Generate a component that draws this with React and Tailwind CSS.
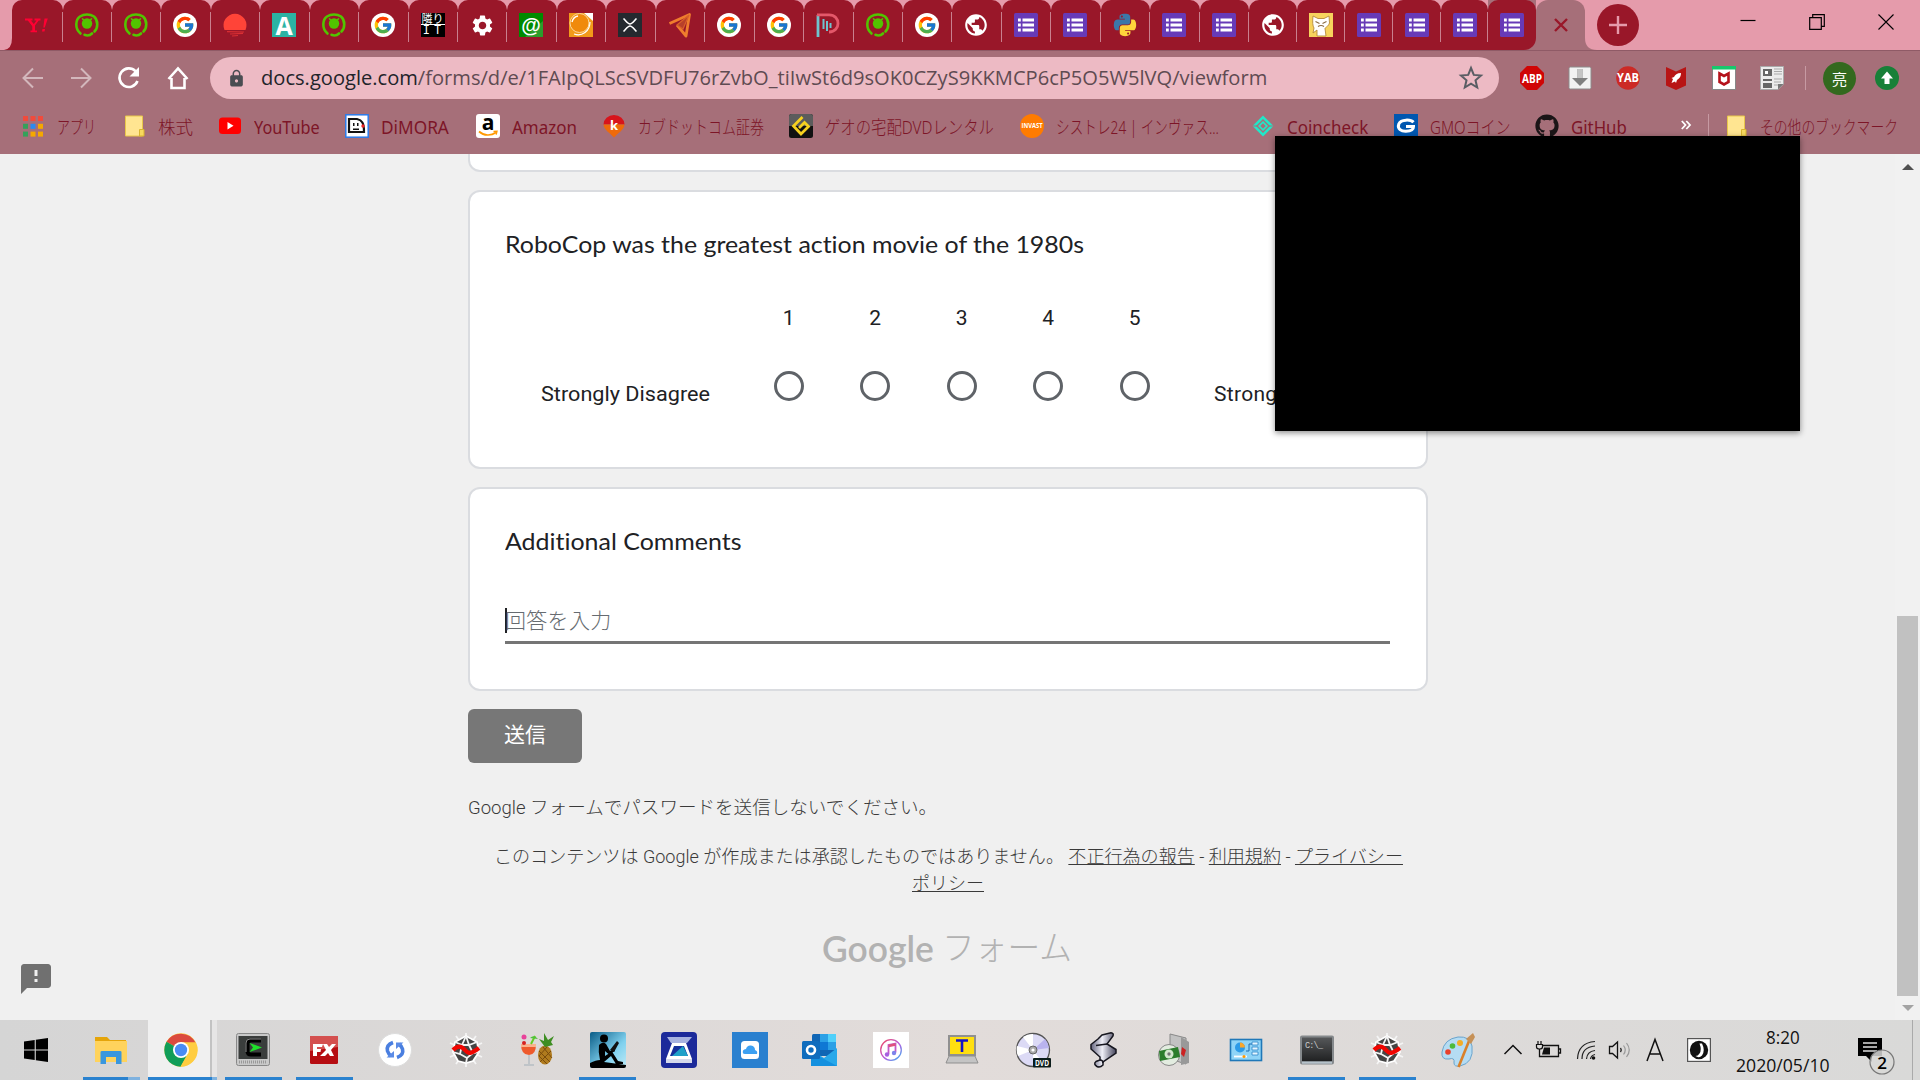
import React, { useLayoutEffect, useRef, useState } from "react";
import { FcGoogle } from "react-icons/fc";
import { FaGithub } from "react-icons/fa";
import { MdHttps, MdSettings, MdFeedback, MdPublic } from "react-icons/md";

const UI = "font-['Noto_Sans','Noto_Sans_CJK_JP',sans-serif]";
const SEGOE = "font-['Open_Sans','Noto_Sans_CJK_JP',sans-serif]";
const ROBOTO = "font-['Roboto','Noto_Sans_CJK_JP',sans-serif]";
const GSANS = "font-['Lato','Noto_Sans_CJK_JP',sans-serif] [font-variant-ligatures:none]";

/* One line of text condensed or stretched to a given advance width. */
function Fit({ w, className = "", children }) {
  const ref = useRef(null);
  const [scale, setScale] = useState(1);
  useLayoutEffect(() => {
    setScale(w / ref.current.offsetWidth);
  }, [w]);
  return (
    <span className="inline-block whitespace-nowrap" style={{ width: w }}>
      <span ref={ref} className={"inline-block origin-left whitespace-nowrap " + className} style={{ transform: `scaleX(${scale})` }}>
        {children}
      </span>
    </span>
  );
}

const Svg = ({ s = 24, vb = "0 0 24 24", className = "", children }) => (
  <svg width={s} height={s} viewBox={vb} fill="none" className={"shrink-0 overflow-visible " + className}>{children}</svg>
);

/* ---------- tab icons ---------- */
const Yahoo = () => (
  <Svg><path d="M1 6.500H8.500M10.500 6.500H16.500M4.500 7L9.500 13V18M14 7L9.500 13M6.500 18.300H13" stroke="#ff0033" strokeWidth="1.800" /><path d="M4 7H6.500L11 12.500V18H8.500V13.500Z" fill="#ff0033" /><path d="M20.500 5.500H23.800L20.800 14.500H19.300ZM18.500 16H21L20.500 18.500H18Z" fill="#ff0033" /></Svg>
);
const GreenE = () => (
  <Svg>
    <path d="M5.500 20.500C-.5 15.500 .5 6.500 5 3.500C9 .8 15 .8 19 3.500C23.500 7.500 23 15 19.500 18.500" stroke="#52c400" strokeWidth="2.600" strokeLinecap="round" />
    <path d="M9.500 21.800C12 22.800 15 22.500 17 20.500" stroke="#52c400" strokeWidth="2.600" strokeLinecap="round" />
    <circle cx="12" cy="10.500" r="5.200" fill="#52c400" />
    <path d="M7.500 5.800L9 7.500M16.500 5.800L15 7.500" stroke="#52c400" strokeWidth="1.600" strokeLinecap="round" />
  </Svg>
);
const Goog = () => (
  <span className="flex size-6 items-center justify-center rounded-full bg-white"><FcGoogle size={20} /></span>
);
const Sun = () => (
  <Svg><path d="M1.500 17A11.500 11.500 0 1 1 22.500 17Z" fill="#ff4438" /><path d="M4 18.700L21 19M7 21L20 20.300M9 23L15 22.500" stroke="#d92f33" strokeWidth="1.200" /></Svg>
);
const LetterA = () => (
  <Svg><rect width="24" height="24" fill="#2bb3a3" /><text x="12" y="21.500" textAnchor="middle" fontFamily="Open Sans" fontWeight="bold" fontSize="25" fill="#fff">A</text></Svg>
);
const Tonari = () => (
  <span className="flex size-6 flex-col items-center bg-black text-white">
    <span className="h-[12px] w-6 border-b border-white text-center font-['Noto_Sans_CJK_JP',sans-serif] text-[11px] leading-[11px]">隣り</span>
    <span className="h-[12px] font-['Liberation_Mono',monospace] text-[12px] leading-[12px] tracking-[4px] pl-[3px]">IT</span>
  </span>
);
const At = () => (
  <Svg><rect width="24" height="24" fill="#008a00" /><path d="M24 8V24H6Z" fill="#2c9c2c" /><text x="12" y="18.500" textAnchor="middle" fontFamily="Liberation Sans" fontWeight="bold" fontSize="20" fill="#fff">@</text></Svg>
);
const Orange = () => (
  <Svg><rect width="24" height="24" fill="#f29a1a" /><path d="M15 0H24V8Z" fill="#fff" /><circle cx="10.500" cy="10" r="9.500" fill="#f08a0c" stroke="#fbd9a0" strokeWidth="1" /><path d="M3 9C4 5 6 3.500 9 3" stroke="#fff" strokeWidth="1.400" /><path d="M5 21C13 24 21 18 21 9" stroke="#fff" strokeWidth="1.200" /></Svg>
);
const Xrp = () => (
  <Svg><rect width="24" height="24" fill="#23292f" /><path d="M5.500 5.500C8 8 10 11 12 11S16 8 18.500 5.500M5.500 18.500C8 16 10 13 12 13S16 16 18.500 18.500" stroke="#fff" strokeWidth="1.600" /></Svg>
);
const Tri = () => (
  <Svg><path d="M1.500 10.500L21.500 1.500L18 23L9 12" stroke="#ef7d2d" strokeWidth="2.800" strokeLinejoin="round" /><path d="M21 2L9 12L15 16Z" fill="#b8402a" stroke="#d9602a" strokeWidth="1.200" /></Svg>
);
const PD = () => (
  <Svg><path d="M2 2V24" stroke="#6fc4cf" strokeWidth="2.800" /><path d="M1 1.800H13C25 1.800 25 19 13 19" stroke="#e4586a" strokeWidth="2.800" /><path d="M7.500 6V16M11 8V18M14.500 10V15" stroke="#6fc4cf" strokeWidth="2" /></Svg>
);
const Globe = () => <MdPublic size={26} color="#fff" className="-ml-px" />;
const Form = () => (
  <Svg><rect width="24" height="24" rx="1.500" fill="#673ab7" /><path d="M4 7H6.800M4 12H6.800M4 17H6.800M8.500 7H20M8.500 12H20M8.500 17H20" stroke="#fff" strokeWidth="3" /></Svg>
);
const Python = () => (
  <Svg vb="-16 16 480 480">
    <path fill="#ffd43b" fillRule="evenodd" d="M439.800 200.500c-7.700-30.900-22.300-54.200-53.400-54.200h-40.100v47.400c0 36.800-31.200 67.800-66.800 67.800H172.700c-29.200 0-53.400 25-53.400 54.300v101.800c0 29 25.200 46 53.400 54.300 33.800 9.900 66.300 11.700 106.800 0 26.900-7.800 53.400-23.500 53.400-54.300v-40.700H226.200v-13.600h160.200c31.100 0 42.600-21.700 53.400-54.200 11.200-33.500 10.700-65.700 0-108.600zM286.200 404c11.100 0 20.100 9.100 20.100 20.300 0 11.300-9 20.400-20.100 20.400-11 0-20.100-9.200-20.100-20.400.1-11.300 9.100-20.300 20.100-20.300z" />
    <path fill="#3b77a8" fillRule="evenodd" d="M167.800 248.100h106.800c29.700 0 53.400-24.500 53.400-54.300V91.900c0-29-24.400-50.700-53.400-55.600-35.800-5.900-74.700-5.600-106.800.1-45.200 8-53.400 24.700-53.400 55.600v40.700h106.900v13.600h-147c-31.100 0-58.300 18.700-66.800 54.200-9.800 40.700-10.200 66.100 0 108.600 7.600 31.600 25.700 54.200 56.800 54.200H101v-48.800c0-35.300 30.500-66.400 66.800-66.400zm-6.700-142.600c-11.100 0-20.100-9.100-20.100-20.300.1-11.300 9-20.400 20.100-20.400 11 0 20.100 9.200 20.100 20.400s-9 20.300-20.100 20.300z" />
  </Svg>
);
const Cat = () => (
  <Svg><rect width="24" height="24" fill="#f7d35d" /><path d="M4 3L9 5.500H15L20 3L20.500 10C19 14 16.500 14 16 15.500L17 23H8L8 17L4 20L5 15Q3 12 4 3Z" fill="#fff" stroke="#b58a3a" strokeWidth=".9" /><path d="M6.500 8.500L10.500 10.500M17.500 8.500L13.500 10.500M9 13.500Q12 11.500 15 13.500" stroke="#8a6a40" strokeWidth="1.100" /></Svg>
);
const Gear = () => <MdSettings size={25} color="#fff" />;

const tabs = [Yahoo, GreenE, GreenE, Goog, Sun, LetterA, GreenE, Goog, Tonari, Gear, At, Orange, Xrp, Tri, Goog, Goog, PD, GreenE, Goog, Globe, Form, Form, Python, Form, Form, Globe, Cat, Form, Form, Form, Form];

function TabStrip() {
  return (
    <div className="flex h-[50px] bg-[#e59bab]">
      <div className="flex h-[50px] items-end"><Svg s={12} vb="0 0 12 12"><path d="M12 0V12H4Q12 11 12 0" fill="#991729" /></Svg></div>
      {tabs.map((Icon, i) => (
        <div key={i} className={"flex h-[50px] shrink-0 items-center " + (i === 0 ? "w-[50.500px] bg-[#e59bab]" : i < 25 ? "w-[49.450px] bg-[#e59bab]" : i < 30 ? "w-[47.900px] bg-[#e59bab]" : "w-[47.900px] bg-[#a66f79]")}>
          <div className={"flex h-full w-full items-center rounded-t-[10px] bg-[#991729] pl-3 " + (i === 30 ? "rounded-br-[12px]" : "")}>
            <Icon />
            {i < 30 && <span className="ml-auto mt-1 h-[30px] w-px bg-[#c9808e]" />}
          </div>
        </div>
      ))}
      <div className="flex h-[50px] w-[49px] items-center justify-center rounded-t-[12px] bg-[#a66f79]">
        <Svg s={14} vb="0 0 14 14"><path d="M1 1L13 13M13 1L1 13" stroke="#991729" strokeWidth="2.400" /></Svg>
      </div>
      <div className="flex w-3 items-end"><Svg s={12} vb="0 0 12 12"><path d="M0 0V12H12Q0 12 0 0" fill="#a66f79" /></Svg></div>
      <div className="mt-1 flex size-[42px] items-center justify-center rounded-full bg-[#991729]">
        <Svg s={18} vb="0 0 18 18"><path d="M9 0V18M0 9H18" stroke="#e59bab" strokeWidth="2.400" /></Svg>
      </div>
      <div className="ml-auto mr-[26px] mt-[14px] flex h-4 gap-[53px] text-black">
        <Svg s={16} vb="0 0 16 16"><path d="M.5 6.500H15.500" stroke="#000" strokeWidth="1.200" /></Svg>
        <Svg s={16} vb="0 0 16 16"><path d="M.7 3.700H12.300V15.300H.7ZM3.700 3.500V.7H15.300V12.300H12.500" stroke="#000" strokeWidth="1.200" /></Svg>
        <Svg s={16} vb="0 0 16 16"><path d="M.5.5L15.500 15.500M15.500.5L.5 15.500" stroke="#000" strokeWidth="1.100" /></Svg>
      </div>
    </div>
  );
}

/* ---------- toolbar ---------- */
const Ext = ({ children }) => <span className="flex w-12 items-center justify-center">{children}</span>;

function Toolbar() {
  return (
    <div className="flex h-[56px] items-center bg-[#a66f79] shadow-[inset_0_1px_0_#8f5a66]">
      <div className="flex w-[210px] items-center pl-[21px] text-white">
        <span className="w-12"><Svg className="opacity-50"><path d="M22 12H3M12 2.500L2.500 12L12 21.500" stroke="#fff" strokeWidth="2" /></Svg></span>
        <span className="w-12"><Svg className="opacity-50"><path d="M2 12H21M12 2.500L21.500 12L12 21.500" stroke="#fff" strokeWidth="2" /></Svg></span>
        <span className="w-[49px]"><Svg><path d="M20.500 15A9.300 9.300 0 1 1 18.500 5.200L20.500 7.500" stroke="#fff" strokeWidth="2.600" /><path d="M22 1V10.500H12.500Z" fill="#fff" /></Svg></span>
        <Svg><path d="M5.500 12V22H18.500V12M2.500 13L12 2.500L21.500 13" stroke="#fff" strokeWidth="2.600" /></Svg>
      </div>
      <div className="flex h-[42px] w-[1289px] items-center rounded-full bg-[#edbac4] pl-[17px] pr-4">
        <MdHttps size={19} color="#4a4d52" />
        <span className={"ml-[15px] text-[20px] text-[#5f4b52] " + SEGOE}>
          <Fit w={1006}><span className="text-[#22242a]">docs.google.com</span>/forms/d/e/1FAIpQLScSVDFU76rZvbO_tiIwSt6d9sOK0CZyS9KKMCP6cP5O5W5lVQ/viewform</Fit>
        </span>
        <Svg className="ml-auto"><path d="M12 2L14.800 8.900L22 9.500L16.500 14.300L18.200 21.500L12 17.700L5.800 21.500L7.500 14.300L2 9.500L9.200 8.900Z" stroke="#5a5d64" strokeWidth="2" /></Svg>
      </div>
      <div className="ml-[9px] flex items-center">
        <Ext><Svg><path d="M7 0H17L24 7V17L17 24H7L0 17V7Z" fill="#d00505" /><text x="12" y="16.500" textAnchor="middle" fontFamily="Open Sans" fontWeight="bold" fontSize="12" textLength="20" lengthAdjust="spacingAndGlyphs" fill="#fff">ABP</text></Svg></Ext>
        <Ext><Svg><rect x="1" y="1" width="22" height="22" rx="1.500" fill="#f2f2f2" stroke="#8c8c8c" /><path d="M9.500 3H14.500V12H20L12 20L4 12H9.500Z" fill="#808080" /><path d="M9.500 3H14.500V12H9.500Z" fill="#c4c4c4" /></Svg></Ext>
        <Ext><Svg><circle cx="12" cy="12" r="11.800" fill="#cc2a25" /><text x="12" y="16.300" textAnchor="middle" fontFamily="Open Sans" fontWeight="bold" fontSize="12" textLength="22" lengthAdjust="spacingAndGlyphs" fill="#fff">YAB</text></Svg></Ext>
        <Ext><Svg><path d="M2 1L12 5.500L22 1V19.500L12 24L2 19.500Z" fill="#b81414" /><path d="M17 7C13 7 11 9 10 11L7.500 12L9 13L7.500 17L11 15.500L12 17L13 14C16 12 17 10 17 7Z" fill="#fff" /></Svg></Ext>
        <Ext><Svg><rect x=".5" y=".5" width="23" height="23" fill="#fff" stroke="#888" /><rect width="24" height="3.500" fill="#16c96d" /><path d="M7.500 7.500L12 10L16.500 7.500V16L12 18.500L7.500 16Z" stroke="#b5121b" strokeWidth="2.600" /></Svg></Ext>
        <Ext><Svg><path d="M.5.5H23.500V18L18 23.500H.5Z" fill="#ececec" stroke="#aaa" /><path d="M3 3H12V10H3ZM3 13H12V15H3ZM3 17H12V22H3Z" fill="#666" /><path d="M14 3H22M14 5.500H22M14 8H22M14 13H22M14 16H21M14 19H18" stroke="#aaa" /><path d="M5 5H8V8H5Z" fill="#fff" /><path d="M18 23.500V18H23.500Z" fill="#777" /></Svg></Ext>
        <span className="ml-[9px] h-6 w-px bg-[#c79aa3]" />
        <span className="ml-[17px] flex size-[33px] items-center justify-center rounded-full bg-[#33691e] font-['Noto_Sans_CJK_JP',sans-serif] text-[15px] leading-none text-white">亮</span>
        <Svg className="ml-[19px]"><circle cx="12" cy="12" r="12" fill="#188038" /><path d="M12 5.500L18 12.500H14.500V18H9.500V12.500H6Z" fill="#fff" /></Svg>
      </div>
    </div>
  );
}

/* ---------- bookmarks ---------- */
const Apps = () => (
  <Svg vb="-2 -2 24 24">
    {["#f04b3c", "#f04b3c", "#f04b3c", "#34a15a", "#2b8af0", "#f5a800", "#34a15a", "#f5a800", "#f5a800"].map((c, i) => (
      <rect key={i} x={(i % 3) * 7.5} y={Math.floor(i / 3) * 7.8} width="5" height="5" fill={c} />
    ))}
  </Svg>
);
const Folder = () => (
  <Svg><path d="M3.500 2H20.500V22H3.500Z" fill="#ffe591" stroke="#e8c74a" /><path d="M17.500 15.500H22V22H17.500Z" fill="#f7d95f" stroke="#d9b52f" /></Svg>
);
const Tube = () => <Svg><rect x="1" y="3.500" width="22" height="16.500" rx="3.500" fill="#f00" /><path d="M9.500 8L15.500 11.700L9.500 15.500Z" fill="#fff" /></Svg>;
const Dimora = () => (
  <Svg><rect x=".8" y=".8" width="22.400" height="22.400" fill="#fff" stroke="#2a7bea" strokeWidth="1.500" /><path d="M4 5H12C17 6 19 9 19 18H4Z" stroke="#111" strokeWidth="2.200" /><path d="M8 9H9.500V12H8ZM12 9H13.500V12H12ZM8 14.500H14V16H8Z" fill="#111" /><circle cx="18" cy="12" r="1.700" fill="#e22" /></Svg>
);
const Amazon = () => (
  <Svg><rect width="24" height="24" rx="3" fill="#fff" /><text x="12" y="15.500" textAnchor="middle" fontFamily="Open Sans" fontWeight="bold" fontSize="21" fill="#000">a</text><path d="M3 17.500C8 22 15 22 20 18.500" stroke="#f90" strokeWidth="1.700" /><path d="M17.500 17.500L21 17.200L20.200 20.700" stroke="#f90" strokeWidth="1.300" /></Svg>
);
const Kabu = () => (
  <Svg><path d="M1.500 10.500A10.500 9.500 0 0 1 22.500 10.500Z" fill="#d7141c" /><path d="M1.500 10.500H22.500C22 16 16 19 12 23.500C8 19 2 16 1.500 10.500Z" fill="#ee6a0c" /><text x="12" y="15.500" textAnchor="middle" fontFamily="Open Sans" fontWeight="bold" fontSize="13" fill="#fff">k</text></Svg>
);
const Geo = () => (
  <Svg><rect width="24" height="24" rx="2.500" fill="#111" /><path d="M0 12V2.500A2.500 2.500 0 0 1 2.500 0H21.500A2.500 2.500 0 0 1 24 2.500V12Z" fill="#5c5c5c" /><path d="M13.500 3L4.500 12L12 20L19.500 12.500L15.500 8.500L10 14" stroke="#f6d11f" strokeWidth="2.800" /></Svg>
);
const Invast = () => (
  <Svg><circle cx="12" cy="12" r="12" fill="#ff7b00" /><text x="12" y="14.200" textAnchor="middle" fontFamily="Open Sans" fontWeight="bold" fontSize="7" textLength="21" lengthAdjust="spacingAndGlyphs" fill="#fff">INVAST</text></Svg>
);
const Coin = () => (
  <Svg><path d="M12 1.500L22.500 12L12 22.500L1.500 12Z" fill="#20e8c8" /><path d="M12 6L18 12L12 18L6 12Z" stroke="#a66f79" strokeWidth="1.300" /><path d="M12 9.300L14.700 12L12 14.700L9.300 12Z" fill="#a66f79" /><path d="M1 12H6M18 12H23" stroke="#a66f79" strokeWidth="1.200" /></Svg>
);
const Gmo = () => (
  <Svg><rect width="24" height="24" fill="#0057b0" /><path d="M19.500 8.200C17 5.500 7 4.800 4.800 10C3 15 7.500 17.500 12 17.300C16 17.200 19.500 16 19.500 12.500H12" stroke="#fff" strokeWidth="3" /></Svg>
);
const Hub = () => <FaGithub size={24} color="#1b1517" />;

const marks = [
  [Apps, "アプリ", 39, "w-[101px] font-light"],
  [Folder, "株式", 35, "w-[96px] font-light"],
  [Tube, "YouTube", 66, "w-[127px]"],
  [Dimora, "DiMORA", 68, "w-[131px]"],
  [Amazon, "Amazon", 65, "w-[126px]"],
  [Kabu, "カブドットコム証券", 126, "w-[187px] font-light"],
  [Geo, "ゲオの宅配DVDレンタル", 169, "w-[231px] font-light"],
  [Invast, "シストレ24 | インヴァス...", 163, "w-[231px] font-light"],
  [Coin, "Coincheck", 81, "w-[143px]"],
  [Gmo, "GMOコイン", 81, "w-[141px] font-light"],
  [Hub, "GitHub", 56, "w-[146px]"],
];

function Bookmarks() {
  return (
    <div className={"flex h-[48px] items-start bg-[#a66f79] pl-[21px] pt-[8px] text-[18px] leading-[26px] text-[#7d1527] " + UI}>
      {marks.map(([Icon, label, w, slot]) => (
        <div key={label} className={"flex shrink-0 gap-3 " + slot}>
          <Icon />
          <Fit w={w}>{label}</Fit>
        </div>
      ))}
      <Svg s={10} vb="0 0 10 10" className="mt-[6px]"><path d="M.8 1L4.500 5L.8 9M5.300 1L9 5L5.300 9" stroke="#fff" strokeWidth="1.800" /></Svg>
      <span className="ml-[17px] h-6 w-px bg-[#c79aa3]" />
      <div className="ml-[15px] flex gap-3 font-light"><Folder /><Fit w={138}>その他のブックマーク</Fit></div>
    </div>
  );
}

/* ---------- page ---------- */
const card = "w-[960px] border-2 border-[#dadce0] bg-white";

function Page() {
  return (
    <div className={"flex h-[866px] bg-[#f0f0f0] text-[#202124] " + ROBOTO}>
      <div className="flex w-[468px] items-end pb-[23px] pl-[18px]"><MdFeedback size={36} color="#707070" /></div>
      <div className="w-[960px]">
        <div className={"h-[18px] rounded-b-[12px] border-t-0 " + card} />
        <div className={"mt-[18px] h-[279px] rounded-[12px] pl-[35px] pt-[34px] " + card}>
          <div className={"h-9 text-[24px] leading-9 " + GSANS}><Fit w={579}>RoboCop was the greatest action movie of the 1980s</Fit></div>
          <div className="mt-[32px] flex text-[21px]">
            <div className="flex w-[240.500px] items-end pb-[3px] pl-[36px] leading-6"><Fit w={169}>Strongly Disagree</Fit></div>
            {[1, 2, 3, 4, 5].map((n) => (
              <div key={n} className="flex w-[86.500px] flex-col items-center">
                <span className="h-12 pt-3 leading-6">{n}</span>
                <span className="mt-[29px] size-[30px] rounded-full border-3 border-[#5f6368]" />
                <span className="h-2" />
              </div>
            ))}
            <div className="flex items-end pb-[3px] pl-[36px] leading-6 tracking-[0.300px]">Strongly Agree</div>
          </div>
        </div>
        <div className={"mt-[18px] h-[204px] rounded-[12px] pl-[35px] pt-[34px] " + card}>
          <div className={"h-9 text-[24px] leading-9 " + GSANS}><Fit w={237}>Additional Comments</Fit></div>
          <div className="mt-[44px] flex h-[41px] w-[885px] border-b-3 border-[#757575] pt-[5px]">
            <span className="h-[25px] w-[2px] bg-[#202124]" />
            <span className="-ml-[2px] text-[21px] font-light leading-[27px] tracking-[0.300px] text-[#666b70]">回答を入力</span>
          </div>
        </div>
        <div className="mt-[18px] flex h-[54px] w-[114px] items-center justify-center rounded-[6px] bg-[#777777] text-[21px] text-white">送信</div>
        <div className="mt-[31px] text-[18px] font-light leading-[27px] text-[#3a3a3a]"><Fit w={469}>Google フォームでパスワードを送信しないでください。</Fit></div>
        <div className="mt-[22px] flex flex-col items-center text-[18px] font-light leading-[27px] text-[#3a3a3a]">
          <Fit w={909}>このコンテンツは Google が作成または承認したものではありません。 <u>不正行為の報告</u> - <u>利用規約</u> - <u>プライバシー</u></Fit>
          <Fit w={72}><u>ポリシー</u></Fit>
        </div>
        <div className="mt-[25px] flex items-center justify-center pr-[2px] text-[#b2b2b2]">
          <span className={"text-[37px] font-semibold leading-[52px] " + GSANS}><Fit w={112}>Google</Fit></span>
          <span className="ml-2 text-[34px] font-light leading-[52px]"><Fit w={130}>フォーム</Fit></span>
        </div>
      </div>
      <div className="ml-auto flex w-[25px] flex-col items-center bg-[#f1f1f1]">
        <Svg s={12} vb="0 0 12 12" className="mt-[7px]"><path d="M0 9L6 3L12 9Z" fill="#505050" /></Svg>
        <span className="mt-[443px] h-[380px] w-[21px] bg-[#c1c1c1]" />
        <Svg s={12} vb="0 0 12 12" className="mt-[6px]"><path d="M0 3L6 9L12 3Z" fill="#a3a3a3" /></Svg>
      </div>
    </div>
  );
}

/* ---------- taskbar ---------- */
const S36 = (p) => <Svg s={36} vb="0 0 36 36">{p.children}</Svg>;
const Win = () => <Svg><path d="M0 3.500L10.700 2V11.500H0ZM11.800 1.800L24 0V11.500H11.800ZM0 12.600H10.700V22L0 20.500ZM11.800 12.600H24V24L11.800 22.300Z" fill="#000" /></Svg>;
const Explorer = () => (
  <S36><path d="M2 5H14L17 8H33V30H2Z" fill="#e5a50a" /><path d="M2 9H34V30H2Z" fill="#ffd35c" /><path d="M7.500 20Q7.500 19 9 19H27Q28.500 19 28.500 20V32H23V25H13V32H7.500Z" fill="#3a97de" /></S36>
);
const Chrome = () => (
  <S36>
    <circle cx="18" cy="18" r="16.700" fill="#ffcd41" />
    <path d="M18 18L3.500 9.700A16.700 16.700 0 0 1 32.500 10.500H18Z" fill="#db4a3e" />
    <path d="M3.500 9.700A16.700 16.700 0 0 0 17.500 34.700L25 22L18 18Z" fill="#109d58" />
    <path d="M18 10.500H32.500A16.700 16.700 0 0 1 17.500 34.700L24.500 22Z" fill="#ffcd41" />
    <circle cx="18" cy="18" r="8" fill="#fff" /><circle cx="18" cy="18" r="6.200" fill="#4a8cf5" />
  </S36>
);
const Cmder = () => (
  <S36><rect x="1.500" y="1.500" width="33" height="32" rx="2" fill="#c9c9c9" stroke="#888" /><rect x="3.500" y="4" width="29" height="23" fill="#3a3d3c" /><path d="M26 8.500H16Q12.500 8.500 12.500 12V19Q12.500 22.500 16 22.500H26" stroke="#000" strokeWidth="4" /><path d="M26 7H15Q11 7 11 11V20" stroke="#aaa" strokeWidth=".8" /><path d="M14.500 11L27 15.500L14.500 20L18 15.500Z" fill="#1fe02a" /><path d="M4 30H32" stroke="#999" strokeWidth="3" strokeDasharray="1 1" /></S36>
);
const FX = () => (
  <S36><rect x="4" y="4" width="28" height="28" rx="1.500" fill="#b60d12" /><path d="M4 4H32V15L4 19Z" fill="#d4504f" /><path d="M7 12H17L16 15H11V17H15L14.500 20H11V24H7ZM14 24L20 18L17 12H21L23 15L26 12H30L25 18L28 24H24L22 21L19 24Z" fill="#fff" /></S36>
);
const Sync = () => (
  <S36><circle cx="18" cy="18" r="16.500" fill="#fff" stroke="#ddd" /><path d="M16 10.500Q9 13 10.500 19Q11.500 22 14 24" stroke="#4a7fe0" strokeWidth="3.600" /><path d="M20 25.500Q27 23 25.500 17Q24.500 14 22 12" stroke="#4a7fe0" strokeWidth="3.600" /><path d="M9.500 25.500H17V19ZM26.500 10.500H19V17Z" fill="#5b8be6" /></S36>
);
const Spyder = () => (
  <S36><path d="M18 1V35M2 11L34 25M34 11L2 25M8 4L28 32M28 4L8 32" stroke="#f4f4f4" strokeWidth="1.800" /><path d="M18 4L29 10L31 20L25 29L18 31L10 29L5 20L7 10Z" fill="#444" stroke="#fff" strokeWidth="1.800" /><path d="M18 4L21 13L29 10M7 10L14 13L12 22L5 20M21 13H14L18 4M21 13L25 21L19 26L12 22M25 21L31 20M19 26L18 31" stroke="#f4f4f4" strokeWidth="1.800" /><path d="M5 18C10 13 13 14 17 18C21 23 24 21 31 16" stroke="#f00500" strokeWidth="4.200" /></S36>
);
const Pine = () => (
  <S36><ellipse cx="26" cy="23" rx="7" ry="9.500" fill="#b07b1e" /><path d="M20 19L31 30M20 24L28 32M24 15L33 26M32 19L21 30M28 15L20 24" stroke="#7a4c0c" /><path d="M26 15L20 7L25 9L25 1L29 8L35 4L32 10L34 13Z" fill="#3e8e22" /><path d="M2 12H17Q17 23 10 23Q2 23 2 12Z" fill="#ee5a2c" /><path d="M2 12H17V15H2Z" fill="#f9b28e" /><path d="M10 23V32M5 33H15" stroke="#bfc4c8" strokeWidth="2" /><path d="M12 12L16 4" stroke="#6c2" strokeWidth="2" /><path d="M11 6Q15 2 19 7Z" fill="#4ec23a" /><circle cx="5" cy="5" r="2.500" fill="#e8429a" /><circle cx="5" cy="11" r="2" fill="#d62020" /></S36>
);
const Kindle = () => (
  <S36><defs><linearGradient id="kd" x1="0" y1="0" x2="1" y2="1"><stop stopColor="#0a5c86" /><stop offset=".6" stopColor="#7fd0ee" /><stop offset="1" stopColor="#bdeaf7" /></linearGradient></defs><rect width="36" height="36" rx="2" fill="url(#kd)" /><circle cx="14" cy="6.500" r="4" fill="#000" /><path d="M9 13Q13 9 16 12L20 19L24 17L25 19L19 22.500L15 19V24L22 19.500L28 29L33 30V32H26L21 24L14 30L36 33V34Q36 36 34 36H2Q0 36 0 34V31Q6 28 10 28Q8 20 9 13Z" fill="#000" /><path d="M20 18L27 9L29 11L24 20Z" fill="#111" /></S36>
);
const Scan = () => (
  <S36><rect width="36" height="36" rx="4" fill="#1c2a9a" /><path d="M6 5H31L26 11H10Z" fill="#a7b2e0" /><path d="M11 11H25L31 27H5Z" fill="#fff" /><path d="M13 14H23L27 24H9Z" fill="#15309b" /><path d="M22 14L27 24H11Z" fill="#1fa0c8" /><path d="M5 27H31V31H5Z" fill="#d5d9ec" /></S36>
);
const Cloud = () => (
  <S36><rect width="36" height="36" fill="#2a80cf" /><rect x="9" y="9" width="18" height="18" rx="3.500" fill="#fff" /><path d="M13 22Q10 22 11 18.500Q12 17 14 17Q15 13 19 13.500Q23 14 23 18Q26 19 25 22Z" fill="#3ca0f2" /></S36>
);
const Outlook = () => (
  <S36><rect x="10" y="2" width="24" height="22" rx="1.500" fill="#1066b5" /><path d="M18 2H26V10H18Z" fill="#2ba0e6" /><path d="M26 2H34V10H26Z" fill="#50d0fa" /><path d="M18 10H26V18H18Z" fill="#0f78d4" /><path d="M26 10H34V18H26Z" fill="#2ba0e6" /><path d="M9 18L22 26L35 16V34H9Z" fill="#28a8ea" /><path d="M9 20L35 34H9Z" fill="#1490df" /><rect x="0" y="9" width="18" height="18" rx="1.500" fill="#0f6cbd" /><circle cx="9" cy="18" r="4" stroke="#fff" strokeWidth="2.600" /></S36>
);
const Itunes = () => (
  <S36><defs><linearGradient id="it" x1="0" y1="0" x2="1" y2="1"><stop stopColor="#f2495c" /><stop offset=".55" stopColor="#b45ee0" /><stop offset="1" stopColor="#36b5f0" /></linearGradient></defs><rect width="36" height="36" fill="#fff" /><circle cx="18" cy="18" r="10.300" stroke="url(#it)" strokeWidth="1.300" /><path d="M15.500 22V13L22.500 11.500V20.500" stroke="#c45ac8" strokeWidth="1.800" /><path d="M15.500 14L22.500 12.500" stroke="#e0507c" strokeWidth="2.400" /><circle cx="14" cy="22.500" r="2.200" fill="#a660e0" /><circle cx="21" cy="21" r="2.200" fill="#7d83ea" /></S36>
);
const Tera = () => (
  <S36><rect x="5" y="4" width="26" height="19" fill="#ffdf10" stroke="#909090" strokeWidth="2" /><path d="M5 24H31L34 31H2Z" fill="#c4c4c4" stroke="#8f8f8f" /><path d="M12 8.500H24M18 8.500V20" stroke="#1414c8" strokeWidth="2.600" /></S36>
);
const Dvd = () => (
  <S36><circle cx="18" cy="18" r="16.500" fill="#dcdaf5" stroke="#555" strokeWidth="1.300" /><path d="M18 18L8 5A16 16 0 0 1 18 2ZM18 18L28 31A16 16 0 0 1 18 34ZM18 18L2 14A16 16 0 0 0 3 24Z" fill="#fff" /><path d="M18 18L30 7A16 16 0 0 1 34 16Z" fill="#b9b3ee" /><circle cx="18" cy="18" r="4" fill="#aaa" stroke="#666" /><circle cx="18" cy="18" r="1.600" fill="#fff" /><rect x="18" y="26" width="18" height="9.500" rx="1" fill="#0b1c1b" /><text x="27" y="33.700" textAnchor="middle" fontFamily="Open Sans" fontWeight="bold" fontSize="8" textLength="14" lengthAdjust="spacingAndGlyphs" fill="#fff">DVD</text></S36>
);
const Script = () => (
  <S36><defs><linearGradient id="sc"><stop stopColor="#62627c" /><stop offset=".45" stopColor="#f0f0f8" /><stop offset="1" stopColor="#45455c" /></linearGradient></defs><path d="M16 3L25 .8Q28 1 27 4L21 12L30 17.500V21L17 30V33Q14 36 11 34.500Q7 32 10 29.500L14 28L14 25L5 17V12.500L12 7Z" fill="url(#sc)" stroke="#16161f" strokeWidth="1.500" /><path d="M10 13.500L21 12M14 28Q17 28 17 31" stroke="#16161f" strokeWidth="1.500" /></S36>
);
const Money = () => (
  <S36><path d="M13 2L29 6V32L13 27Z" fill="#c2c2c2" stroke="#888" /><path d="M24 5L32 10V31L24 33Z" fill="#999" /><path d="M25 15L29 18L27 25L24 22Z" fill="#c22" /><circle cx="12" cy="23" r="10.500" fill="#e3ece0" stroke="#888" /><path d="M2 19L21 15L23 25L3 29Z" fill="#2c7d2c" /><circle cx="12" cy="22" r="4.500" fill="#d3e7cd" /><circle cx="12" cy="22" r="1.700" fill="#777" /></S36>
);
const Panel = () => (
  <S36><rect x="2.500" y="7.500" width="31" height="21" fill="#8fd4f7" stroke="#2078b8" strokeWidth="1.600" /><circle cx="12" cy="15.500" r="5" fill="#2c9be8" /><path d="M12 15.500V10.500A5 5 0 0 1 17 15.500Z" fill="#fba62a" /><path d="M18 19H21V12H24" stroke="#1c6bb0" /><path d="M24 10H30V13H24ZM24 15H30V18H24ZM24 20H30V23H24Z" fill="#e5f6ff" stroke="#2c85c8" strokeWidth=".8" /><path d="M6 24.500H19" stroke="#fff" strokeWidth="1.800" /><circle cx="16" cy="24.500" r="1.500" fill="#f90" /></S36>
);
const CmdIcon = () => (
  <S36><defs><linearGradient id="cm" x1="0" y1="0" x2="0" y2="1"><stop stopColor="#585a5c" /><stop offset="1" stopColor="#1b1c1d" /></linearGradient></defs><rect x="2" y="4.500" width="32" height="27" rx="1" fill="url(#cm)" stroke="#85898c" strokeWidth="2" /><path d="M3 30.500H33" stroke="#b6c2ca" strokeWidth="2.400" /><text x="6" y="16" fontFamily="Liberation Mono" fontSize="8.500" textLength="18" fill="#ccc">C:\_</text></S36>
);
const Paint = () => (
  <S36><path d="M2 20Q4 7 18 5Q30 4 32 14Q34 31 20 34Q14 35 14 31Q15 25 9 27Q1 28 2 20Z" fill="#b5dcf3" stroke="#6aa4cc" /><circle cx="8" cy="20" r="2.800" fill="#e8402c" /><circle cx="12.500" cy="14" r="2.800" fill="#4cba3a" /><circle cx="20" cy="11" r="3" fill="#f3ad28" /><path d="M18.500 35L29 9" stroke="#d9812a" strokeWidth="2.600" /><path d="M26 7L33 1L35 5L31 12Z" fill="#c69157" /></S36>
);

const apps = [
  [Cmder, 1], [FX, 1], [Sync, 0], [Spyder, 0], [Pine, 0], [Kindle, 1], [Scan, 0], [Cloud, 0], [Outlook, 0],
  [Itunes, 0], [Tera, 0], [Dvd, 0], [Script, 0], [Money, 0], [Panel, 0], [CmdIcon, 1], [Spyder, 1], [Paint, 0],
];

function Taskbar() {
  return (
    <div className={"flex h-[60px] bg-linear-to-r from-[#d5d5d5] via-[#e2dcda] to-[#d9d9d8] " + SEGOE}>
      <div className="flex w-[72px] items-center justify-center"><Win /></div>
      <div className="flex w-[76px] flex-col pl-[11px]">
        <div className="flex h-[57px] items-center pl-[10px] pt-[3px]"><Explorer /></div>
        <div className="flex h-[3px]"><span className="w-[45px] bg-[#2a82cf]" /><span className="w-3 bg-[#7fb2df]" /></div>
      </div>
      <div className="flex w-[62px] flex-col bg-[#f0f0f0]">
        <div className="flex h-[57px] items-center justify-center pl-[3px] pt-[3px]"><Chrome /></div>
        <div className="h-[3px] bg-[#2a82cf]" />
      </div>
      <div className="w-[2px] border-b-3 border-[#2a82cf] bg-[#c2c2c2]" />
      <div className="w-[5px] border-b-3 border-[#7fb2df] bg-[#e6e5e5]" />
      <div className="flex pl-[1px]">
        {apps.map(([Icon, open], i) => (
          <div key={i} className="flex w-[70.880px] shrink-0 flex-col items-center">
            <div className="flex h-[57px] items-center pt-[3px]"><Icon /></div>
            {open ? <div className="h-[3px] w-[57px] bg-[#2a82cf]" /> : null}
          </div>
        ))}
      </div>
      <div className="ml-[9px] flex items-center">
        <Svg s={20} vb="0 0 20 20" className="mr-[12px]"><path d="M1.500 14L10 5.500L18.500 14" stroke="#111" strokeWidth="1.500" /></Svg>
        <Svg s={26} vb="0 0 26 26" className="mr-[15px]"><path d="M8 8.500H23.500V19.500H4.500V12M23.500 12H25.500V16H23.500" stroke="#111" strokeWidth="1.300" /><path d="M9 10.500H15V17.500H7Z" fill="#111" /><path d="M1.500 7.500H7.500V10Q7.500 12 4.500 12Q1.500 12 1.500 10ZM3 4V7.500M6 4V7.500" stroke="#111" strokeWidth="1.200" /></Svg>
        <Svg s={20} vb="0 0 20 20" className="mr-[12px]"><path d="M1.500 19Q2 3 19 1.500M6 19Q6 7 19 6M10.500 19Q11 11.500 19 10.500M14.500 19Q15 15.500 19 14.500" stroke="#222" strokeWidth="1.200" /><circle cx="17.500" cy="18" r="1.800" fill="#111" /></Svg>
        <Svg className="mr-[11px]"><path d="M1.500 8.500H4.500L9.500 4V20L4.500 15.500H1.500Z" stroke="#111" strokeWidth="1.300" /><path d="M12.500 10Q14 12 12.500 14" stroke="#222" strokeWidth="1.300" /><path d="M15.500 7.500Q19 12 15.500 16.500M18.500 5Q24 12 18.500 19" stroke="#999" strokeWidth="1.200" /></Svg>
        <Svg className="mr-[20px]"><path d="M4 23L12 1.500L20 23M6.500 16H17.500" stroke="#111" strokeWidth="1.500" /></Svg>
        <Svg><rect x=".6" y=".6" width="22.800" height="22.800" fill="#fff" stroke="#555" strokeWidth="1.200" /><circle cx="12" cy="12" r="9.200" fill="#111" /><path d="M12.500 5.500Q15 12 12.500 15.500Q11 18 8.500 18Q12 20.500 15 17.500Q18.500 12.500 15 5.500Z" fill="#fff" /></Svg>
      </div>
      <div className="ml-[25px] flex w-[94px] flex-col items-center pt-[3px] text-[18px] leading-[28px] text-[#111]">
        <Fit w={34}>8:20</Fit>
        <Fit w={94}>2020/05/10</Fit>
      </div>
      <Svg s={42} vb="0 0 42 42" className="ml-[26px] mt-[16px]"><path d="M2 2H26V20H16V26L10 20H2Z" fill="#000" /><path d="M7 7H21M7 11H21M7 15H21" stroke="#ddd" strokeWidth="1.300" /><circle cx="26" cy="26" r="12" fill="#d8d8d7" fillOpacity=".85" stroke="#777" strokeWidth="1.200" /><text x="26" y="32.500" textAnchor="middle" fontFamily="Open Sans" fontWeight="600" fontSize="17" fill="#000">2</text></Svg>
      <span className="ml-auto mr-[7px] w-px bg-[#aaa]" />
    </div>
  );
}

export default function App() {
  return (
    <div className="relative flex h-[1080px] w-[1920px] flex-col overflow-hidden bg-[#f0f0f0]">
      <TabStrip />
      <Toolbar />
      <Bookmarks />
      <Page />
      <Taskbar />
      <div className="absolute left-[1275px] top-[136px] h-[295px] w-[525px] bg-black shadow-[0_2px_6px_rgba(0,0,0,0.45)]" />
    </div>
  );
}
